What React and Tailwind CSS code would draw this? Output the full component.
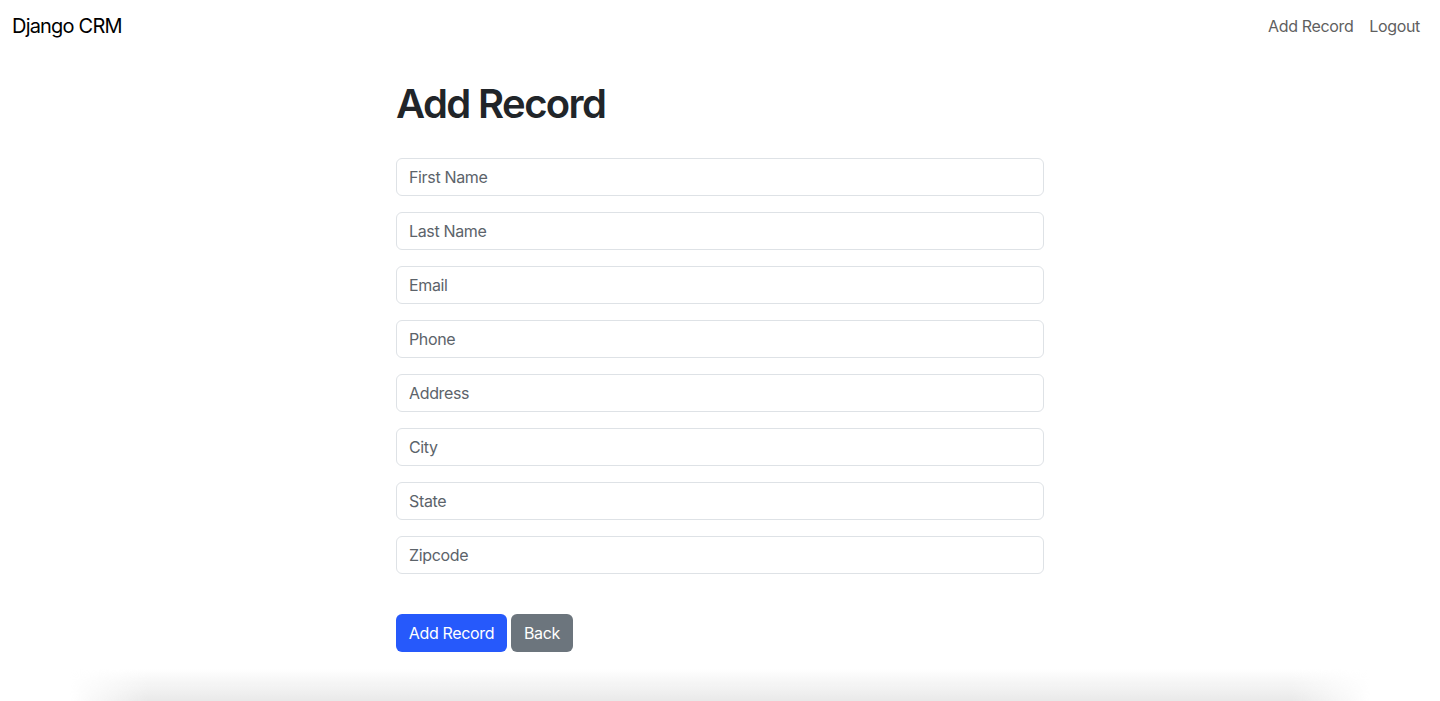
const fields = ['First Name', 'Last Name', 'Email', 'Phone', 'Address', 'City', 'State', 'Zipcode'];

export default function App() {
  return (
    <div className="flex h-[701px] flex-col overflow-hidden bg-white font-['Inter','Liberation_Sans',sans-serif] tracking-[-0.35px] text-[#212529]">
      <nav className="flex h-[52px] shrink-0 items-center justify-between px-3">
        <a href="#" className="text-[20px] tracking-[-0.8px] text-black">Django CRM</a>
        <div className="flex items-center text-[16px] text-[#5f5f5f]">
          <a href="#" className="px-2 py-2">Add Record</a>
          <a href="#" className="px-2 py-2">Logout</a>
        </div>
      </nav>

      <main className="mx-auto mt-[28px] w-[648px]">
        <h1 className="mb-[30px] text-[40px] font-semibold leading-[48px] tracking-[-1.6px]">Add Record</h1>
        <form onSubmit={(e) => e.preventDefault()}>
          <div className="flex flex-col gap-4">
            {fields.map((name) => (
              <input
                key={name}
                type="text"
                placeholder={name}
                className="h-[38px] w-full rounded-[6px] border border-[#dee2e6] px-3 text-[16px] tracking-[-0.35px] outline-none placeholder:text-[#5c636a]"
              />
            ))}
          </div>
          <div className="mt-10 flex gap-1">
            <button type="submit" className="h-[38px] w-[111px] rounded-[6px] bg-[#2659fb] text-[16px] text-white">Add Record</button>
            <button type="button" className="h-[38px] w-[62px] rounded-[6px] bg-[#6c757d] text-[16px] text-white">Back</button>
          </div>
        </form>
      </main>

      <div className="mx-[70px] mt-auto h-[32px] shrink-0 bg-gradient-to-b from-transparent to-[#e9e9e9] [mask-image:linear-gradient(to_right,transparent,black_6%,black_94%,transparent)]" />
    </div>
  );
}
